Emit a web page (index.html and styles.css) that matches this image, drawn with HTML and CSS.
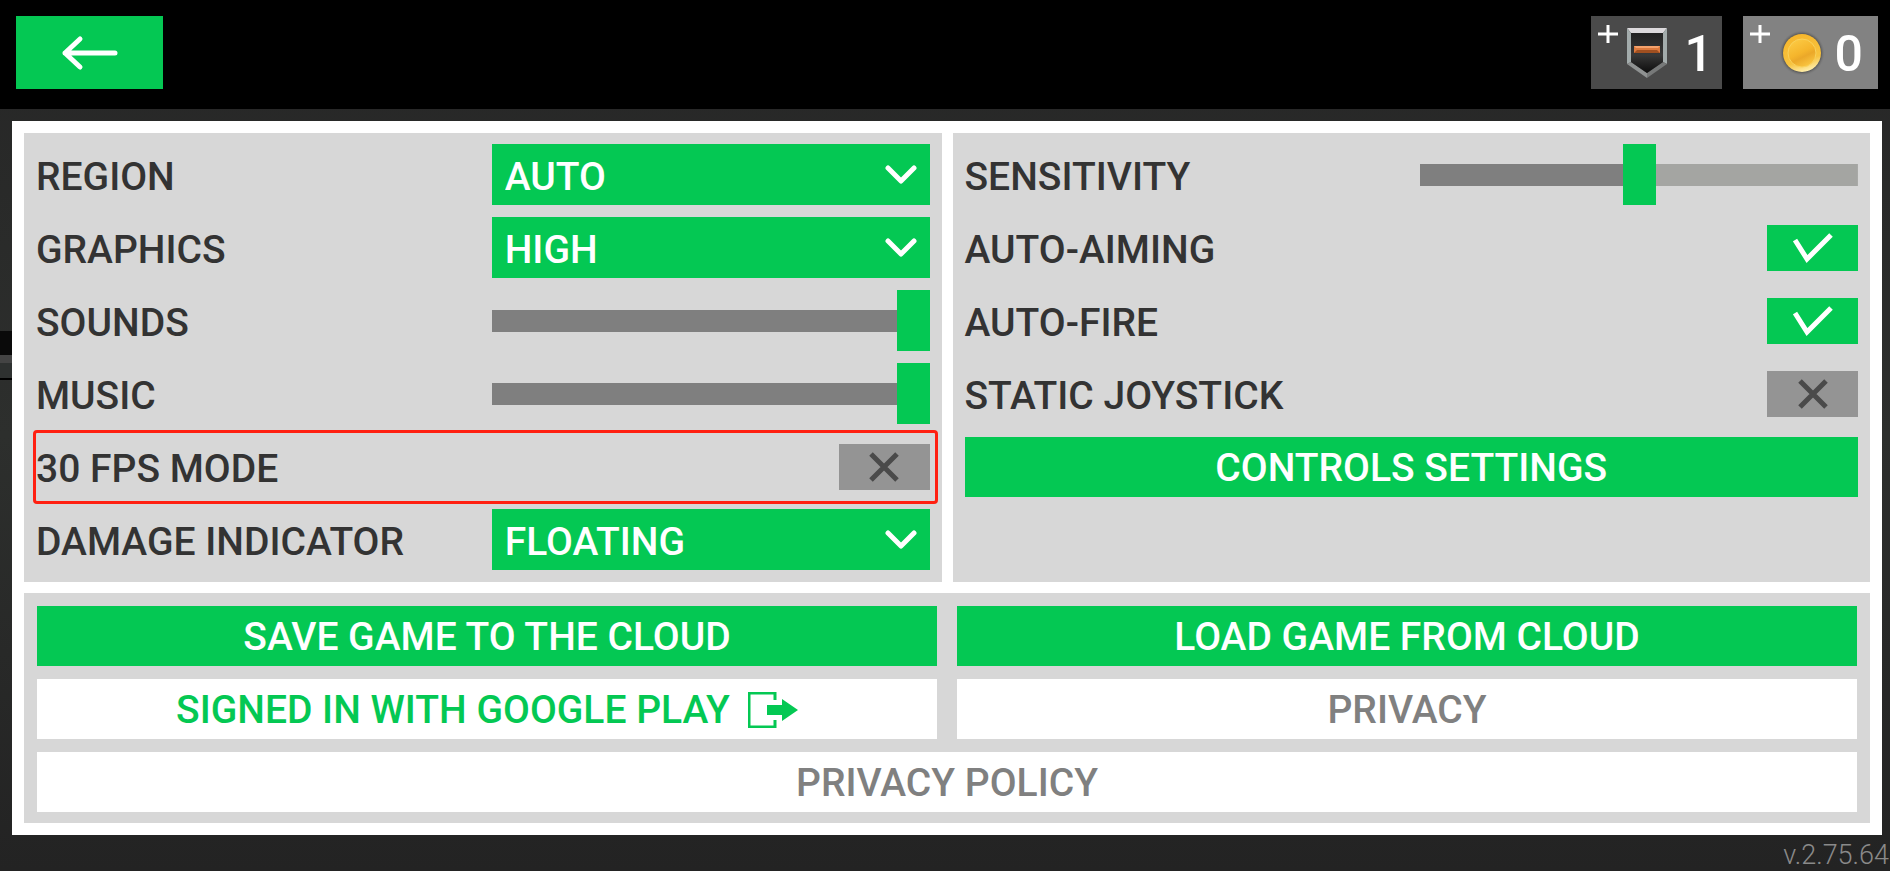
FILE: index.html
```
<!DOCTYPE html>
<html lang="en">
<head>
    <meta charset="UTF-8">
    <meta name="viewport" content="width=device-width, initial-scale=1.0">
    <title>Settings</title>
    <link rel="stylesheet" href="styles.css">
</head>
<body>
    <header class="top-bar">
        <button type="button" class="back-button" aria-label="Back">
            <svg width="58" height="36" viewBox="0 0 58 36" fill="none" stroke="#fff" stroke-width="5" stroke-linecap="round" stroke-linejoin="round">
                <path d="M54 18H4M19 4L4 18l15 14"/>
            </svg>
        </button>
        <div class="badges">
            <button type="button" class="badge rank-badge" aria-label="Rank 1">
                <svg class="plus" width="20" height="20" viewBox="0 0 20 20" stroke="#fff" stroke-width="3">
                    <path d="M10 1v18M0 10h20"/>
                </svg>
                <svg width="40" height="50" viewBox="0 0 40 50">
                    <defs>
                        <linearGradient id="shield" x1="0" y1="0" x2="0" y2="1">
                            <stop offset="0" stop-color="#222"/>
                            <stop offset="0.55" stop-color="#383838"/>
                            <stop offset="1" stop-color="#0c0c0c"/>
                        </linearGradient>
                    </defs>
                    <path d="M0 0h40l-4 5H4z" fill="#dcd9dc"/>
                    <path d="M0 0l4 5v29l-4 2z" fill="#a3acac"/>
                    <path d="M40 0l-4 5v29l4 2z" fill="#a3acac"/>
                    <path d="M0 36l4-2 16 11v5z" fill="#8f9292"/>
                    <path d="M40 36l-4-2-16 11v5z" fill="#777979"/>
                    <path d="M4 5h32v29L20 45 4 34z" fill="url(#shield)"/>
                    <path d="M7 18h26v7H7z" fill="#dd7a3e"/>
                    <path d="M7 18h26l-2 2H9z" fill="#f5a26c"/>
                    <path d="M7 25h26l-3-3H10z" fill="#a04f20"/>
                </svg>
                <span class="badge-count">1</span>
            </button>
            <button type="button" class="badge coin-badge" aria-label="Coins 0">
                <svg class="plus" width="20" height="20" viewBox="0 0 20 20" stroke="#fff" stroke-width="3">
                    <path d="M10 1v18M0 10h20"/>
                </svg>
                <svg width="46" height="46" viewBox="0 0 46 46">
                    <defs>
                        <radialGradient id="halo">
                            <stop offset="0.8" stop-color="#4a4a4a"/>
                            <stop offset="1" stop-color="#828282" stop-opacity="0"/>
                        </radialGradient>
                        <linearGradient id="rim" x1="0.3" y1="0" x2="0.6" y2="1">
                            <stop offset="0" stop-color="#f6b62c"/>
                            <stop offset="0.7" stop-color="#f7c33f"/>
                            <stop offset="1" stop-color="#fff0b0"/>
                        </linearGradient>
                        <linearGradient id="face" x1="0.2" y1="0" x2="0.7" y2="1">
                            <stop offset="0" stop-color="#fccb45"/>
                            <stop offset="0.5" stop-color="#f5b52c"/>
                            <stop offset="0.65" stop-color="#eba829"/>
                            <stop offset="1" stop-color="#fbc843"/>
                        </linearGradient>
                    </defs>
                    <circle cx="23" cy="23" r="23" fill="url(#halo)"/>
                    <circle cx="23" cy="23" r="19" fill="url(#rim)"/>
                    <circle cx="23" cy="23" r="14" fill="url(#face)" stroke="#f9d25c"/>
                </svg>
                <span class="badge-count">0</span>
            </button>
        </div>
    </header>

    <main class="settings">
        <section class="panel">
            <div class="row">
                <label for="region">REGION</label>
                <div class="dropdown">
                    <select id="region"><option>AUTO</option></select>
                    <svg width="32" height="20" viewBox="0 0 32 20"><path d="M3 3l13 13L29 3"/></svg>
                </div>
            </div>
            <div class="row">
                <label for="graphics">GRAPHICS</label>
                <div class="dropdown">
                    <select id="graphics"><option>HIGH</option></select>
                    <svg width="32" height="20" viewBox="0 0 32 20"><path d="M3 3l13 13L29 3"/></svg>
                </div>
            </div>
            <div class="row">
                <label for="sounds">SOUNDS</label>
                <input type="range" id="sounds" class="slider" min="0" max="100" value="100" style="--value: 100%">
            </div>
            <div class="row">
                <label for="music">MUSIC</label>
                <input type="range" id="music" class="slider" min="0" max="100" value="100" style="--value: 100%">
            </div>
            <div class="row highlighted">
                <label for="fps">30 FPS MODE</label>
                <div class="toggle">
                    <input type="checkbox" id="fps">
                    <svg class="cross" width="30" height="30" viewBox="0 0 30 30"><path d="M2 2l26 26M28 2L2 28"/></svg>
                </div>
            </div>
            <div class="row">
                <label for="damage">DAMAGE INDICATOR</label>
                <div class="dropdown">
                    <select id="damage"><option>FLOATING</option></select>
                    <svg width="32" height="20" viewBox="0 0 32 20"><path d="M3 3l13 13L29 3"/></svg>
                </div>
            </div>
        </section>

        <section class="panel">
            <div class="row">
                <label for="sensitivity">SENSITIVITY</label>
                <input type="range" id="sensitivity" class="slider" min="0" max="100" value="50" style="--value: 50%">
            </div>
            <div class="row">
                <label for="aiming">AUTO-AIMING</label>
                <div class="toggle">
                    <input type="checkbox" id="aiming" checked>
                    <svg class="tick" width="40" height="30" viewBox="0 0 40 30"><path d="M2 7l12 19L38 2"/></svg>
                </div>
            </div>
            <div class="row">
                <label for="fire">AUTO-FIRE</label>
                <div class="toggle">
                    <input type="checkbox" id="fire" checked>
                    <svg class="tick" width="40" height="30" viewBox="0 0 40 30"><path d="M2 7l12 19L38 2"/></svg>
                </div>
            </div>
            <div class="row">
                <label for="joystick">STATIC JOYSTICK</label>
                <div class="toggle">
                    <input type="checkbox" id="joystick">
                    <svg class="cross" width="30" height="30" viewBox="0 0 30 30"><path d="M2 2l26 26M28 2L2 28"/></svg>
                </div>
            </div>
            <button type="button" class="button controls-button">CONTROLS SETTINGS</button>
        </section>

        <section class="panel actions">
            <button type="button" class="button">SAVE GAME TO THE CLOUD</button>
            <button type="button" class="button">LOAD GAME FROM CLOUD</button>
            <button type="button" class="button light signed-in">
                SIGNED IN WITH GOOGLE PLAY
                <svg width="50" height="36" viewBox="0 0 50 36">
                    <path d="M27 8V1H1v34h26v-7" fill="none" stroke="#04c853" stroke-width="3"/>
                    <path d="M19 13h15V7l16 11-16 11v-6H19z" fill="#04c853"/>
                </svg>
            </button>
            <button type="button" class="button light">PRIVACY</button>
            <button type="button" class="button light wide">PRIVACY POLICY</button>
        </section>
    </main>

    <footer class="version">v.2.75.64</footer>
</body>
</html>
```

FILE: styles.css
```
* {
    box-sizing: border-box;
}
body {
    font-family: Roboto, sans-serif;
    font-size: 39px;
    font-weight: 500;
    margin: 0;
    min-height: 100vh;
    color: #333;
    /* strip of scenery that shows beside the settings window */
    background:
        linear-gradient(#0a0a0a 0 24px, #444 24px 32px, #2e3130 32px 47px, #000 47px 49px) 0 331px / 12px 49px no-repeat,
        linear-gradient(#262626, #2d2f2d 50%, #232323);
}
button,
select,
input {
    font: inherit;
    margin: 0;
    padding: 0;
    border: none;
    border-radius: 0;
    cursor: pointer;
}
.top-bar {
    display: flex;
    justify-content: space-between;
    align-items: flex-start;
    height: 109px;
    padding: 16px 12px 0 16px;
    background-color: #000;
}
.back-button {
    display: flex;
    justify-content: center;
    align-items: center;
    width: 147px;
    height: 73px;
    background-color: #04c853;
}
.badges {
    display: flex;
    gap: 21px;
}
.badge {
    display: flex;
    align-items: center;
    gap: 9px;
    height: 73px;
    padding: 0 9px 0 7px;
    color: #fff;
    font-size: 50px;
    line-height: 1;
}
.badge .plus {
    align-self: flex-start;
    margin-top: 8px;
}
.badge-count {
    margin-left: auto;
    padding-top: 2px;
}
.rank-badge {
    width: 131px;
    background-color: #4a4a4a;
}
.coin-badge {
    width: 135px;
    padding-right: 15px;
    background-color: #828282;
}
.settings {
    display: grid;
    grid-template-columns: 1fr 1fr;
    gap: 11px;
    margin: 12px 8px 0 12px;
    padding: 12px;
    background-color: #fff;
}
.panel {
    display: flex;
    flex-direction: column;
    gap: 12px;
    padding: 11px 12px 12px;
    background-color: #d7d7d7;
}
.row {
    display: flex;
    justify-content: space-between;
    align-items: center;
    height: 61px;
}
.row label {
    padding-top: 4px;
}
.highlighted {
    position: relative;
}
.highlighted::after {
    content: "";
    position: absolute;
    inset: -6px -8px -7px -3px;
    border: 3px solid #ff2011;
    border-radius: 4px;
    pointer-events: none;
}
.dropdown {
    display: grid;
    align-items: center;
    width: 49%;
    height: 61px;
}
.dropdown select,
.dropdown svg {
    grid-area: 1 / 1;
}
.dropdown select {
    appearance: none;
    height: 61px;
    padding: 4px 13px 0;
    color: #fff;
    background-color: #04c853;
}
.dropdown svg {
    justify-self: end;
    margin-right: 13px;
    fill: none;
    stroke: #fff;
    stroke-width: 5;
    stroke-linecap: round;
    stroke-linejoin: round;
    pointer-events: none;
}
.slider {
    appearance: none;
    width: 49%;
    height: 61px;
    background: linear-gradient(to right, #7f7f7f var(--value), #a4a5a2 var(--value)) center / 100% 22px no-repeat;
}
.slider::-webkit-slider-thumb {
    appearance: none;
    width: 33px;
    height: 61px;
    background-color: #04c853;
}
.slider::-moz-range-thumb {
    width: 33px;
    height: 61px;
    border: none;
    border-radius: 0;
    background-color: #04c853;
}
.toggle {
    display: grid;
    place-items: center;
}
.toggle input,
.toggle svg {
    grid-area: 1 / 1;
}
.toggle input {
    appearance: none;
    width: 91px;
    height: 46px;
    background-color: #949494;
}
.toggle input:checked {
    background-color: #04c853;
}
.toggle svg {
    fill: none;
    stroke-width: 5;
    pointer-events: none;
}
.cross {
    stroke: #4a4a4a;
}
.tick {
    stroke: #fff;
}
.button {
    height: 60px;
    padding-top: 2px;
    color: #fff;
    background-color: #04c853;
}
.button.light {
    color: #808080;
    background-color: #fff;
}
.button.signed-in {
    display: flex;
    justify-content: center;
    align-items: center;
    gap: 18px;
    color: #04c853;
}
.controls-button {
    margin-top: 1px;
}
.actions {
    display: grid;
    grid-template-columns: 1fr 1fr;
    grid-column: 1 / -1;
    gap: 13px 20px;
    padding: 13px 13px 11px;
}
.wide {
    grid-column: 1 / -1;
}
.version {
    padding: 4px 1px 0 0;
    color: #8a8a8a;
    font-size: 27px;
    font-weight: 300;
    line-height: 32px;
    text-align: right;
}
```
